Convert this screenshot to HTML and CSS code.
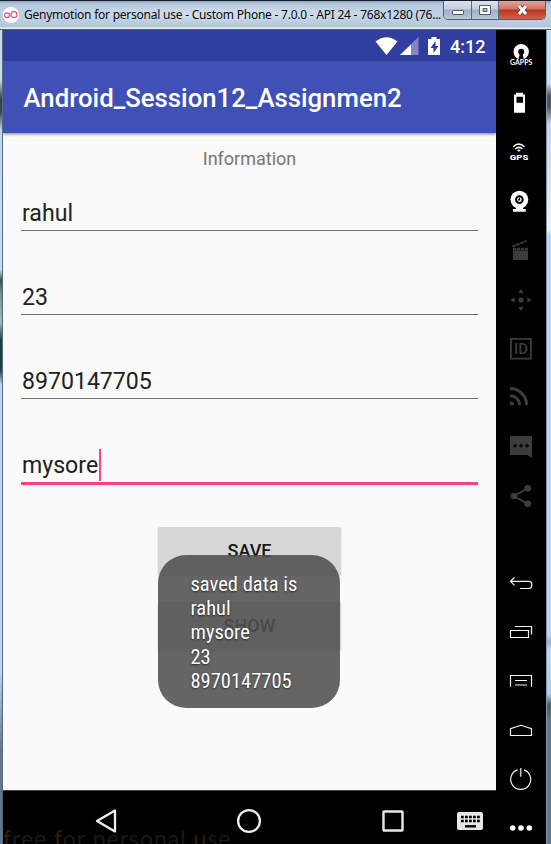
FILE: index.html
```html
<!DOCTYPE html>
<html lang="en">
<head>
<meta charset="utf-8">
<title>Genymotion</title>
<link rel="stylesheet" href="styles.css">
</head>
<body>
<div class="window">
  <header class="titlebar">
    <svg class="logo" width="16" height="16" viewBox="0 0 16 16"><circle cx="8" cy="8" r="8" fill="#fff"/><g fill="none" stroke="#e0527c" stroke-width="1.2"><circle cx="4" cy="8.2" r="2.4"/><circle cx="11" cy="7.7" r="3"/></g></svg>
    <div class="caption"><span class="caption-text">Genymotion for personal use - Custom Phone - 7.0.0 - API 24 - 768x1280 (76...</span></div>
    <div class="controls">
      <div class="control minimize"><svg width="28" height="19" viewBox="0 0 28 19"><rect x="8.5" y="9.500" width="11" height="4" rx=".5" fill="#fff" stroke="#555b68"/></svg></div>
      <div class="control maximize"><svg width="27" height="19" viewBox="0 0 27 19"><path fill="#fff" stroke="#555b68" fill-rule="evenodd" d="M7.500 4.500h11v9H7.500zM11 7.500h4v3h-4z"/></svg></div>
      <div class="control close"><svg width="47" height="19" viewBox="0 0 47 19"><path d="M20 5l7 8M27 5l-7 8" stroke="#5c4650" stroke-width="4.800"/><path d="M20 5l7 8M27 5l-7 8" stroke="#fff" stroke-width="3"/></svg></div>
    </div>
  </header>
  <div class="content">
    <div class="frame-left"></div>
    <main class="phone">
      <div class="statusbar">
        <svg width="46" height="20" viewBox="0 0 46 20"><path fill="#fff" d="M1.500 5.500Q12.500-3 23.500 5.500L12.500 19z"/><path fill="#8188c3" d="M44.500 1v18H26z"/><path fill="#fff" d="M37 8.500V19H26z"/></svg>
        <svg class="battery" width="13" height="20" viewBox="0 0 13 20"><path fill="#fff" d="M3.500 1h5v2H12v16H0V3h3.500z"/><path fill="#303f9f" d="M7.500 5L2.500 12h3v5l5-7h-3z"/></svg>
        <span class="clock">4:12</span>
      </div>
      <div class="appbar"><span class="app-title">Android_Session12_Assignmen2</span></div>
      <div class="form">
        <div class="heading">Information</div>
        <div class="field"><span>rahul</span></div>
        <div class="field"><span>23</span></div>
        <div class="field"><span>8970147705</span></div>
        <div class="field focused"><span>mysore</span><i class="caret"></i></div>
        <div class="actions">
          <div class="button">SAVE</div>
          <div class="button">SHOW</div>
          <div class="toast"><div class="toast-text">saved data is<br>rahul<br>mysore<br>23<br>8970147705</div></div>
        </div>
      </div>
      <nav class="navbar">
        <svg width="24" height="28" viewBox="0 0 24 28"><path d="M3 14L21 3.500v21z" fill="none" stroke="#eee" stroke-width="2.300" stroke-linejoin="round"/></svg>
        <svg width="26" height="28" viewBox="0 0 26 28"><circle cx="13" cy="14" r="10.900" fill="none" stroke="#eee" stroke-width="2.300"/></svg>
        <svg width="24" height="28" viewBox="0 0 24 28"><rect x="2.500" y="4.500" width="19" height="19" rx=".5" fill="none" stroke="#e8e8e8" stroke-width="2.400"/></svg>
        <svg width="26" height="28" viewBox="0 0 26 28"><rect y="5" width="26" height="18" rx="2" fill="#e6e6e6"/><path d="M4 10h19M4 14h19" stroke="#000" stroke-width="2.400" stroke-dasharray="2.800 1.200"/><path d="M8 19.300h11" stroke="#000" stroke-width="2.400"/></svg>
        <div class="watermark"><b>f</b>ree <b>f</b>or personal <b>u</b>se</div>
      </nav>
    </main>
    <aside class="toolbar">
      <svg class="tool" viewBox="0 0 49 49"><circle cx="25.200" cy="21.700" r="7.700" fill="#fff"/><circle cx="25.200" cy="21.800" r="3" fill="#000"/><path d="M24.200 22h2l1.800 8h-5.600z" fill="#000"/><text x="14" y="34.700" textLength="22.300" lengthAdjust="spacingAndGlyphs" class="gapps">GAPPS</text></svg>
      <svg class="tool" viewBox="0 0 49 49"><path fill="#fff" fill-rule="evenodd" d="M20 13.700h7V15.500h2v18.200H18V15.500h2zM20.500 17.700v6h6.500v-6z"/></svg>
      <svg class="tool" viewBox="0 0 49 49"><g fill="none" stroke="#fff" stroke-width="1.500"><path d="M17.200 18.700Q22.800 13.200 28.500 18.700M19.300 21q3.500-3.200 7.200 0"/></g><path d="M21 22.200q1.900-1.500 3.800 0l-1.900 1.500z" fill="#fff"/><text x="13.800" y="31.800" textLength="18.500" lengthAdjust="spacingAndGlyphs" class="gps">GPS</text></svg>
      <svg class="tool" viewBox="0 0 49 49"><circle cx="23.400" cy="22.600" r="8.900" fill="#fff"/><circle cx="23.400" cy="22.600" r="3.300" fill="#fff" stroke="#000" stroke-width="2"/><path d="M23.500 20.500v2.300H22" fill="none" stroke="#000" stroke-width="1.200"/><path d="M20 30h7v2h2.700v2.700H17V32h3z" fill="#fff"/></svg>
      <svg class="tool dim" viewBox="0 0 49 49"><path d="M17 24.500h15v9.500H17z"/><path d="M16.500 20.500L30.500 15" fill="none" stroke="#3c3c38" stroke-width="2" stroke-dasharray="3.400 .8"/><path d="M17 23h15" stroke="#3c3c38" stroke-width="2.600" stroke-dasharray="3.200 .7"/></svg>
      <svg class="tool dim" viewBox="0 0 49 49"><circle cx="25" cy="25" r="2.600"/><path d="M14.200 25l4.500-2.500v5zM35.800 25l-4.500-2.500v5zM25 14l2.800 4.200h-5.600zM25 36l2.800-4.200h-5.600z"/></svg>
      <svg class="tool dim" viewBox="0 0 49 49"><path d="M14.900 14.900h20v19.700h-20z" fill="none" stroke="#3c3c38" stroke-width="1.800"/><text x="18" y="30" textLength="14" lengthAdjust="spacingAndGlyphs" class="id">ID</text></svg>
      <svg class="tool dim" viewBox="0 0 49 49"><path d="M14 28.200a4 4 0 0 1 4 4h-4z"/><path d="M14 22.700a9.600 9.600 0 0 1 9.600 9.600M14 15.500a16.700 16.700 0 0 1 16.700 16.700" fill="none" stroke="#3c3c38" stroke-width="3"/></svg>
      <svg class="tool dim" viewBox="0 0 49 49"><path d="M14 14h22v22l-4.500-3H14z"/><g fill="#000"><circle cx="19" cy="23.700" r="1.700"/><circle cx="25" cy="23.700" r="1.700"/><circle cx="31" cy="23.700" r="1.700"/></g></svg>
      <svg class="tool dim" viewBox="0 0 49 49"><path d="M31.700 17.300L18 25l13.700 7.800" fill="none" stroke="#3c3c38" stroke-width="1.900"/><circle cx="31.700" cy="17.300" r="3.300"/><circle cx="18" cy="25" r="3.300"/><circle cx="31.700" cy="32.800" r="3.300"/></svg>
      <div class="tool-gap"></div>
      <svg class="tool line" viewBox="0 0 49 49"><path d="M18.500 19.500L14.500 23.300l4 4M14.500 23.300H33q2.700 0 2.700 2.700v1.800q0 2.700-2.700 2.700h-9"/></svg>
      <svg class="tool line" viewBox="0 0 49 49"><path d="M14.500 23.500h18v7h-18zM19 19.500h16.500v8"/></svg>
      <svg class="tool line" viewBox="0 0 49 49"><path d="M14.500 30.700V19.500h21v11.200M19 24.500h12M19 29h12"/></svg>
      <svg class="tool line" viewBox="0 0 49 49"><path d="M14.500 30.500v-6.800L25 20.300l10.500 3.400v6.800z"/></svg>
      <svg class="tool line" viewBox="0 0 49 49"><path d="M21.500 15.900a10 10 0 1 0 6.400 0M24.800 14v8.700"/></svg>
      <svg class="tool" viewBox="0 0 49 49"><g fill="#fff"><circle cx="16.700" cy="25" r="2.800"/><circle cx="25" cy="25" r="2.800"/><circle cx="33.300" cy="25" r="2.800"/></g></svg>
    </aside>
    <div class="frame-right"></div>
  </div>
</div>
</body>
</html>
```
FILE: styles.css
```css
* { box-sizing: border-box; }
body { margin: 0; font-family: Roboto, sans-serif; background: #b9d8f5; }
.window { width: 551px; height: 844px; overflow: hidden; display: flex; flex-direction: column; }
svg { display: block; flex: none; }

.titlebar {
  height: 30px; flex: none; display: flex; align-items: flex-start; padding: 0 5px 0 3px;
  border-top: 1px solid #171a29; border-bottom: 1px solid #555b60;
  background: linear-gradient(#8ea5bf 0, #b6c9dd 3px, #c1d1e2 14px, #b3c8df 26px, #e5eff7 27px);
}
.logo { margin-top: 6px; }
.caption { flex: 1; margin: 3px 0 0 5px; height: 20px; line-height: 20px; white-space: nowrap;
  background: radial-gradient(closest-side, rgba(255,255,255,.35), rgba(255,255,255,0)); }
.caption-text { display: inline-block; font: 12px/20px "Noto Sans", sans-serif; color: #08090c; letter-spacing: -.235px; }
.controls { display: flex; width: 103px; height: 19px; border: 1px solid #555f6d; border-top: 0; border-radius: 0 0 5px 5px; overflow: hidden; }
.control { display: flex; justify-content: center; background: linear-gradient(#dbe3ec 0, #c2cfde 8px, #9fb0c5 9px, #b7c7d8 18px); border-right: 1px solid #5d6878; }
.minimize { width: 28px; }
.maximize { width: 27px; }
.close { flex: 1; border: 0; background: linear-gradient(#e0a597 0, #d07562 8px, #b83620 9px, #cf6545 18px); }

.content { flex: 1; display: flex; min-height: 0; }
.frame-left { width: 3px; border-right: 1px solid #56677a;
  background: linear-gradient(#c4def0 0, #c5dcf0 50px, #3a4652 68px, #3a4652 82px, #bdd8f2 100px, #c5ddf8 240px, #34554f 250px, #759b82 265px, #9dbbbb 292px, #174347 310px, #174347 340px, #b8daf8 355px, #b9d9f8 640px, #60788c 720px, #60788c); }
.frame-right { width: 5px; border-left: 1px solid #8798a8;
  background: linear-gradient(#c6e1f6 0, #c6e1f6 53px, #4b535b 66px, #4b535b 76px, #c0d7ef 94px, #e7f2fb 200px, #b4d8fa 205px, #b4d8fa 605px, #8fb4d7 612px, #b4d8fa 620px, #aed0ed 664px, #48596a 675px, #60788c 690px); }

.phone { width: 493px; display: flex; flex-direction: column; background: #fafafa; overflow: hidden; }
.statusbar { height: 31px; flex: none; display: flex; align-items: center; justify-content: flex-end; padding: 0 11px 0 0; background: #303f9f; color: #fff; }
.battery { margin: 0 9px 0 8px; }
.clock { font-size: 18px; font-weight: 500; line-height: 31px; width: 35px; padding-top: 1px; white-space: nowrap; }
.appbar { height: 72px; flex: none; display: flex; align-items: center; padding: 2px 0 0 20.500px; background: #3f51b5; box-shadow: 0 1px 3px rgba(0,0,0,.5); color: #fff; }
.app-title { font-size: 25.750px; font-weight: 500; white-space: nowrap; }

.form { flex: 1; min-height: 0; padding: 0 18px; display: flex; flex-direction: column; }
.heading { height: 43px; padding-top: 9px; line-height: 34px; text-align: center; font-size: 18px; color: #757575; }
.field { height: 55px; margin-bottom: 29px; border-bottom: 1px solid #717171; display: flex; align-items: flex-start; padding: 22px 0 0 1px; font-size: 23.1px; line-height: 32px; color: #212121; }
.focused { height: 57px; margin-bottom: 42px; border-bottom: 3px solid #ff4081; }
.caret { width: 2px; height: 32px; margin: -1px 0 0 1px; background: #ff4081; }
.actions { position: relative; width: 183px; margin-left: 137px; display: flex; flex-direction: column; gap: 27px; }
.button { height: 48px; line-height: 47px; text-align: center; font-size: 18px; font-weight: 500; color: #161616; background: #d6d7d7; border-radius: 2px; box-shadow: 0 1px 2px rgba(0,0,0,.2); }
.toast { position: absolute; left: 0; top: 28px; width: 182px; height: 153px; border-radius: 28px; padding: 16.500px 0 0 32.500px; background: rgba(80,80,80,.88); color: #fff; }
.toast-text { font-family: "Roboto Condensed", Roboto, sans-serif; font-stretch: 75%; font-size: 20.500px; line-height: 24.400px; white-space: nowrap; text-shadow: 0 1px 2px rgba(0,0,0,.6); }

.navbar { position: relative; height: 54px; flex: none; display: flex; align-items: center; background: #000; border-top: 1px solid #444; padding: 7px 13px 0 91px; justify-content: space-between; }
.navbar svg:nth-of-type(2) { margin-left: 66px; }
.navbar svg:nth-of-type(3) { margin-left: 66px; }
.watermark { position: absolute; left: 0; top: 32px; font: 23px/30px Lato, sans-serif; letter-spacing: 1px; color: #191919; white-space: nowrap; }
.watermark b { font-weight: 400; color: #30200b; }

.toolbar { width: 50px; background: #000; overflow: hidden; }
.tool { width: 49px; height: 49px; }
.tool-gap { height: 38px; }
.gapps { font: 700 6.500px Lato, sans-serif; fill: #fff; }
.gps { font: 900 8px Roboto, sans-serif; fill: #fff; }
.id { font: 500 14px Roboto, sans-serif; fill: #3c3c38; }
.dim { fill: #3c3c38; }
.line { fill: none; stroke: #f4f4f4; stroke-width: 1.200; }
```
